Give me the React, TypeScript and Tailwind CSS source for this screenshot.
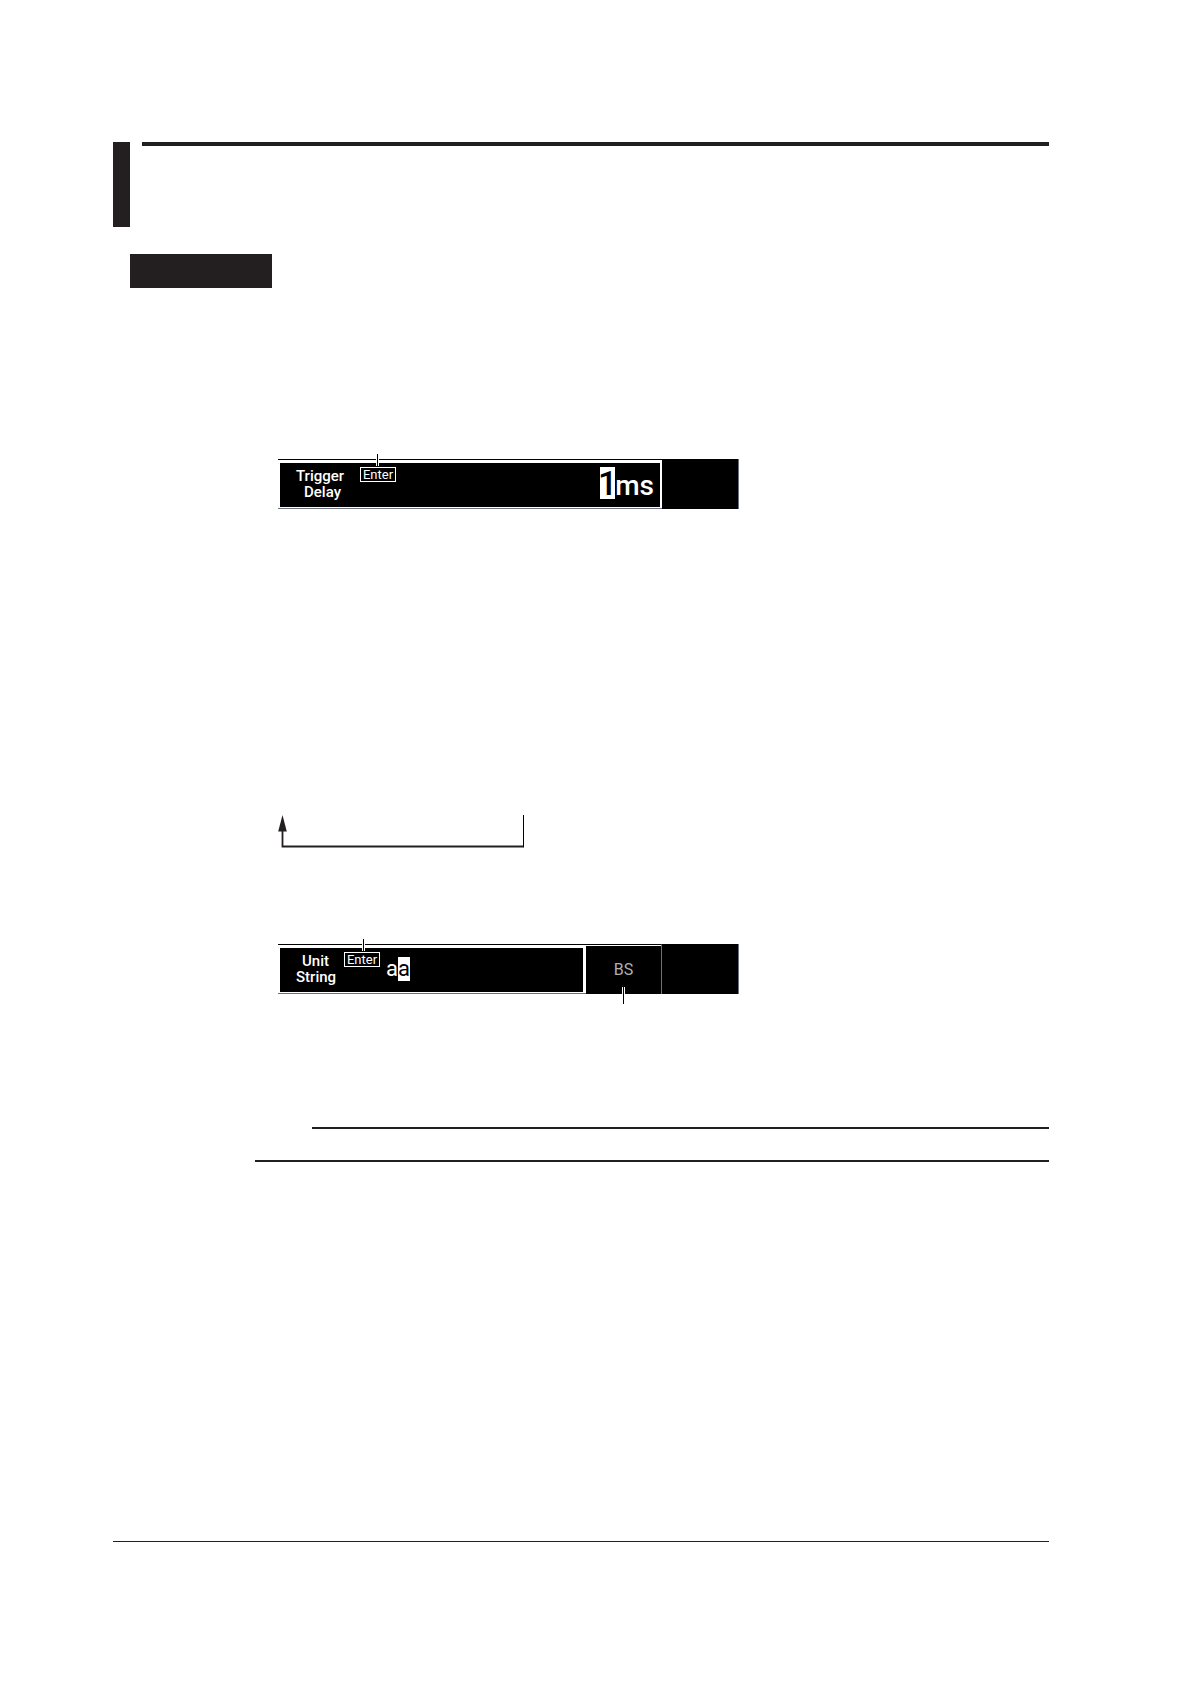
import React from 'react';

const EnterKey: React.FC<{ leader: string }> = ({ leader }) => (
  <button
    type="button"
    className="relative h-[15px] w-9 shrink-0 border border-white text-center text-[13px] leading-[13px] text-white"
  >
    Enter
    {/* Leader line */}
    <span className={`absolute -top-[14px] h-3 w-[3px] border-x border-white bg-black ${leader}`} />
  </button>
);

interface EntryFieldProps {
  label: React.ReactNode;
  className: string;
  children: React.ReactNode;
}

const EntryField: React.FC<EntryFieldProps> = ({ label, className, children }) => (
  <div className={`h-[50px] border-t border-b border-t-black border-b-gray-500 bg-white pt-[3px] pb-px pl-[2px] ${className}`}>
    <div className="flex h-full items-start bg-black pl-4 pt-1">
      <div className="w-12 shrink-0 pt-px text-[15px] leading-4 font-medium">{label}</div>
      {children}
    </div>
  </div>
);

const App: React.FC = () => {
  return (
    <div className="min-h-screen bg-white pt-[142px] pr-[142px] pb-[142px] pl-[113px] font-['Roboto',sans-serif]">
      {/* Section heading */}
      <header className="flex gap-3">
        <div className="h-[85px] w-[17px] bg-[#231f20]" />
        <div className="h-1 flex-1 bg-[#231f20]" />
      </header>
      <div className="mt-[27px] ml-[17px] h-[34px] w-[142px] bg-[#231f20]" />

      {/* Trigger delay entry */}
      <div className="mt-[171px] ml-[165px] flex w-[461px] text-white">
        <EntryField
          label={
            <>
              <div>Trigger</div>
              <div className="pl-2">Delay</div>
            </>
          }
          className="w-96 pr-[2px]"
        >
          <div className="ml-4 flex">
            <EnterKey leader="left-[15px]" />
          </div>
          <div className="ml-auto flex items-baseline pr-1.5 text-[28px] leading-8 font-medium">
            <span className="flex w-[15px] justify-center bg-white text-[34px] text-black">1</span>
            <span>ms</span>
          </div>
        </EntryField>
        <div className="flex-1 border-r border-gray-500 bg-black" />
      </div>

      {/* Wrap-around arrow */}
      <svg className="mt-[306px] ml-[165px] block h-[33px] w-[247px]" viewBox="0 0 247 33" fill="none">
        <path d="M4.5 14v17.5h241" stroke="#231f20" strokeWidth="1.8" />
        <path d="M245.5 0v32.4" stroke="#000" strokeWidth="1" />
        <path d="M4.5 0l4.3 16.5h-8.6z" fill="#231f20" />
      </svg>

      {/* Unit string entry */}
      <div className="mt-24 ml-[165px] flex w-[461px] text-white">
        <EntryField
          label={
            <>
              <div className="pl-1.5">Unit</div>
              <div>String</div>
            </>
          }
          className="w-[308px] pr-[3px]"
        >
          <EnterKey leader="left-[17px]" />
          <div className="mt-[5px] ml-1.5 flex text-[22px] leading-6">
            <span>a</span>
            <span className="bg-white text-black">a</span>
          </div>
        </EntryField>
        <button
          type="button"
          className="relative h-[50px] w-[76px] border-t border-r border-t-black border-r-gray-500 bg-black text-base leading-4 text-[#b0b0b0]"
        >
          <span className="absolute inset-x-0 top-0 h-px bg-white" />
          BS
          <span className="absolute top-[42px] left-9 h-[17px] w-[3px] border-x border-white bg-black" />
        </button>
        <div className="flex-1 border-r border-gray-500 bg-black" />
      </div>

      {/* Note rules */}
      <div className="mt-[133px] ml-[199px] h-0.5 bg-[#231f20]" />
      <div className="mt-[31px] ml-[142px] h-0.5 bg-[#231f20]" />

      {/* Footer rule */}
      <footer className="mt-[379px] h-px bg-[#231f20]" />
    </div>
  );
};

export default App;
